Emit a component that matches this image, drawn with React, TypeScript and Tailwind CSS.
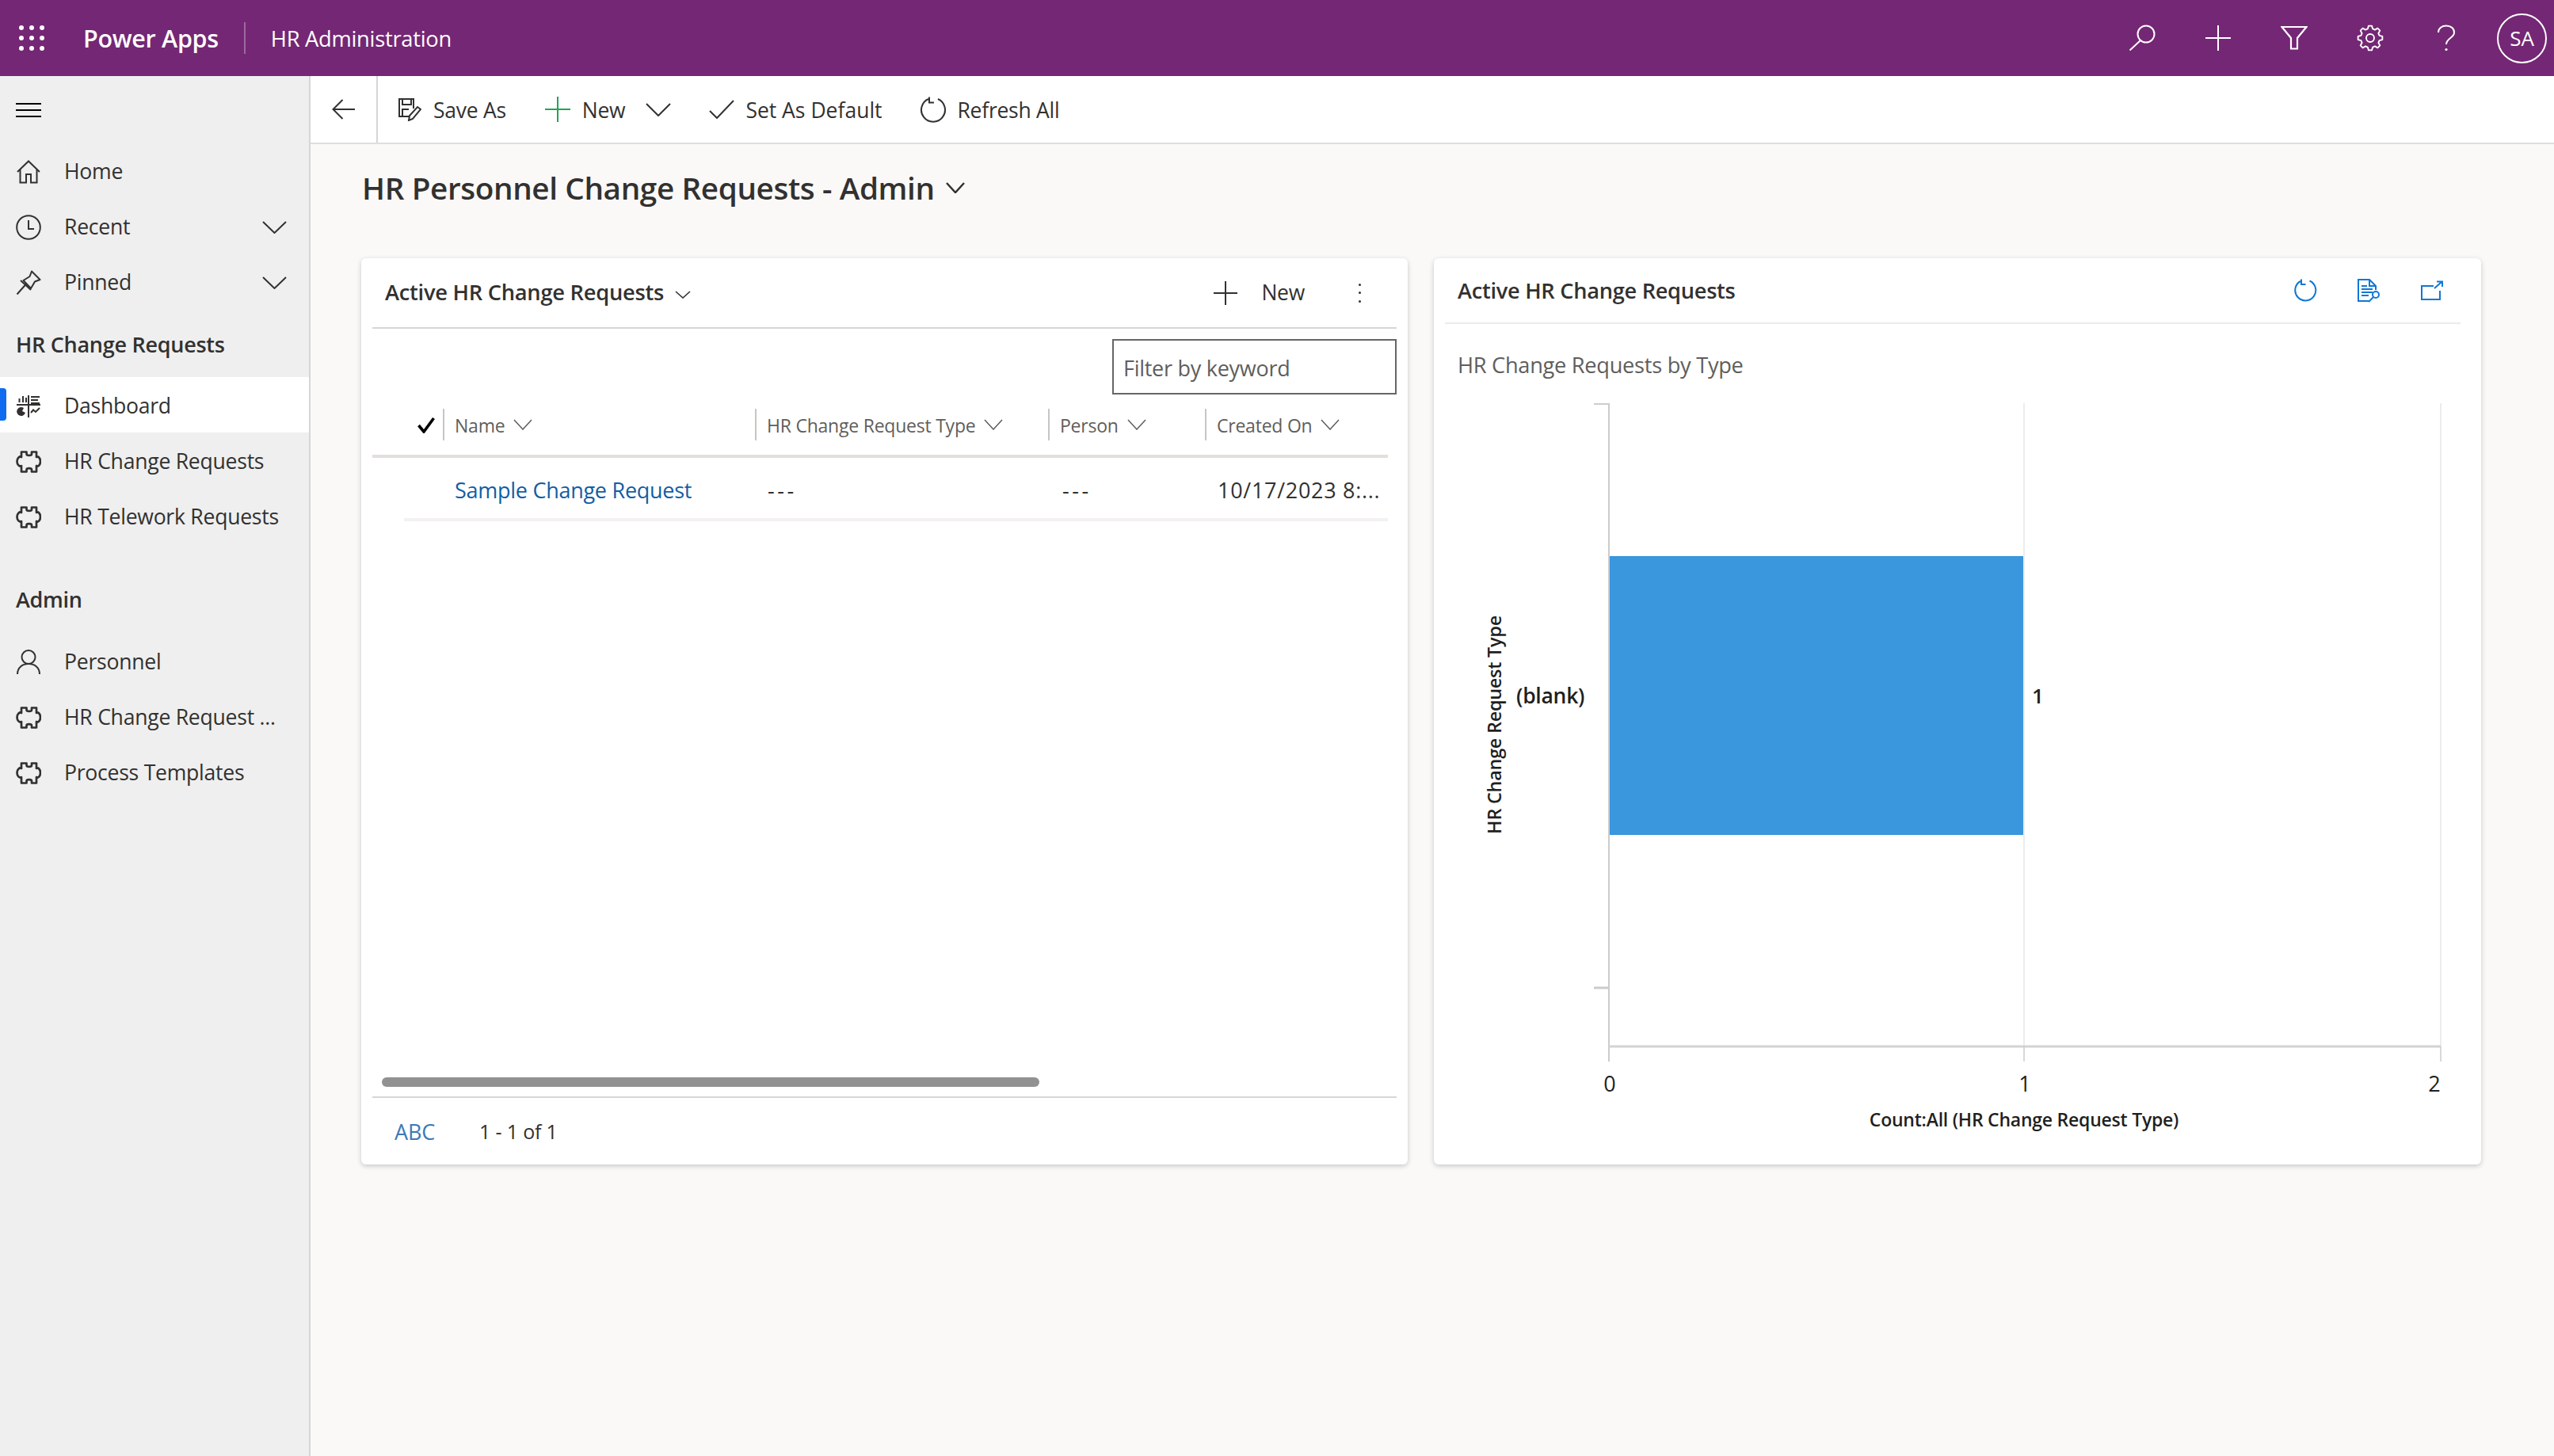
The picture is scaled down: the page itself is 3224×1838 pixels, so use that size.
import React from "react";

const gearPath = () => {
  const teeth = 8;
  const cx = 17;
  const cy = 17;
  const outer = 15.5;
  const inner = 12;
  const pts: string[] = [];
  for (let i = 0; i < teeth; i++) {
    const a = (i / teeth) * Math.PI * 2 - Math.PI / 2;
    const step = (Math.PI * 2) / teeth;
    const seq: [number, number][] = [
      [inner, a - step * 0.34],
      [outer, a - step * 0.17],
      [outer, a + step * 0.17],
      [inner, a + step * 0.34],
    ];
    seq.forEach(([r, t]) => {
      pts.push(`${(cx + r * Math.cos(t)).toFixed(2)} ${(cy + r * Math.sin(t)).toFixed(2)}`);
    });
  }
  return `M${pts.join(" L")} Z`;
};

const Chevron = ({ w = 31, h = 16, sw = 2, color = "#323130" }: { w?: number; h?: number; sw?: number; color?: string }) => (
  <svg width={w} height={h} viewBox={`0 0 ${w} ${h}`} fill="none" stroke={color} strokeWidth={sw}>
    <path d={`M1 1 L${w / 2} ${h - 1} L${w - 1} 1`} />
  </svg>
);

const Puzzle = () => (
  <svg width="32" height="28" viewBox="0 0 32 28" fill="none" stroke="#323130" strokeWidth="2.7" strokeLinejoin="round">
    <path d="M7 1.5H13.5V4C13.5 6.5 20 6.5 20 4V1.5H26V8C28 6.5 31 9 31 13.5C31 18 28 20.5 26 19V26.5H20V24C20 21.5 13.5 21.5 13.5 24V26.5H7V19C5 20.5 1.5 18 1.5 13.5C1.5 9 5 6.5 7 8Z" />
  </svg>
);

const HomeIcon = () => (
  <svg width="32" height="30" viewBox="0 0 32 30" fill="none" stroke="#323130" strokeWidth="2">
    <path d="M2 15 L16 1.5 L30 15" />
    <path d="M5.5 12 V28.5 H13 V18 H19 V28.5 H26.5 V12" />
  </svg>
);

const ClockIcon = () => (
  <svg width="32" height="32" viewBox="0 0 32 32" fill="none" stroke="#323130" strokeWidth="2">
    <circle cx="16" cy="16" r="14.8" />
    <path d="M16 7 V18 H23" />
  </svg>
);

const PinIcon = () => (
  <svg width="32" height="32" viewBox="0 0 32 32" fill="none" stroke="#323130" strokeWidth="2" strokeLinejoin="round">
    <path d="M20 1.5 L30.5 12 L24 14.5 L19 23 L9.5 13 L17.5 8 Z" />
    <path d="M13 17.5 L1.5 30.5" />
    <path d="M6 13 L19 25" />
  </svg>
);

const PersonIcon = () => (
  <svg width="32" height="32" viewBox="0 0 32 32" fill="none" stroke="#323130" strokeWidth="2">
    <ellipse cx="16" cy="9.5" rx="8.5" ry="8.5" />
    <path d="M2 31 C2 23 8 18 16 18 C24 18 30 23 30 31" />
  </svg>
);

const DashIcon = () => (
  <svg width="32" height="30" viewBox="0 0 32 30" fill="none" stroke="#323130" strokeWidth="2">
    <path d="M1 13 H31 M16 1 V29" strokeWidth="2" />
    <path d="M4.5 10 V5 M9 10 V2 M13 10 V4" />
    <path d="M19 3 H30 M19 7 H28 M19 11 H30" />
    <path d="M10 17 A5.5 5.5 0 1 0 12 23 L8 21 Z" fill="#323130" stroke="none" />
    <path d="M19 23 L22 19.5 L25 22 L30 17" />
  </svg>
);

const NavItem = ({ icon, label, chevron, active, low }: { icon: React.ReactNode; label: string; chevron?: boolean; active?: boolean; low?: boolean }) => (
  <div className={`relative flex h-[70px] items-center pl-[20px] ${low ? "pt-[3px]" : ""} ${active ? "bg-white" : ""}`}>
    {active && <div className="absolute left-0 top-[14px] h-[41px] w-[8px] rounded-r-[4px] bg-[#0f6cf0]" />}
    <div className="flex w-[32px] justify-center">{icon}</div>
    <span className="ml-[29px] whitespace-nowrap text-[26.6px] tracking-[-0.01em] text-[#323130]">{label}</span>
    {chevron && (
      <div className="ml-auto mr-[28px] flex">
        <Chevron />
      </div>
    )}
  </div>
);

const Column = ({ w, label }: { w: string; label: string }) => (
  <div className={`flex h-[40px] items-center border-l-2 border-[#c8c6c4] pl-[13px] ${w}`}>
    <span className="whitespace-nowrap pt-[3px] text-[23px] tracking-[-0.01em] text-[#605e5c]">{label}</span>
    <span className="ml-[11px] flex">
      <Chevron w={24} h={14} sw={1.5} color="#605e5c" />
    </span>
  </div>
);

const TopIcon = ({ children }: { children: React.ReactNode }) => (
  <div className="flex h-[96px] w-[96px] items-center justify-center">{children}</div>
);

export default function App() {
  return (
    <div className="flex h-screen w-full flex-col overflow-hidden bg-[#faf9f8] font-['Open_Sans','Noto_Sans',sans-serif] text-[#323130]">
      <header className="flex h-[96px] shrink-0 items-center bg-[#742774] text-white">
        <svg className="ml-[24px]" width="32" height="32" viewBox="0 0 32 32" fill="#ffffff">
          {[3, 16, 29].map((y) =>
            [3, 16, 29].map((x) => <circle key={`${x}-${y}`} cx={x} cy={y} r="3" />)
          )}
        </svg>
        <span className="ml-[49px] whitespace-nowrap pt-[2px] text-[30.5px] font-semibold tracking-[-0.01em]">Power Apps</span>
        <div className="ml-[32px] h-[40px] w-[2px] bg-[#9c6a9c]" />
        <span className="ml-[32px] whitespace-nowrap pt-[2px] text-[27.3px] tracking-[-0.01em]">HR Administration</span>
        <div className="ml-auto flex items-center">
          <TopIcon>
            <svg width="34" height="34" viewBox="0 0 34 34" fill="none" stroke="#fff" strokeWidth="2">
              <circle cx="22" cy="12" r="10.5" />
              <path d="M15 20 L1.5 32.5" />
            </svg>
          </TopIcon>
          <TopIcon>
            <svg width="34" height="34" viewBox="0 0 34 34" fill="none" stroke="#fff" strokeWidth="2">
              <path d="M17 1 V33 M1 17 H33" />
            </svg>
          </TopIcon>
          <TopIcon>
            <svg width="34" height="32" viewBox="0 0 34 32" fill="none" stroke="#fff" strokeWidth="2.2">
              <path d="M1.5 2 H32.5 L21 16 V29.5 H13 V16 Z" />
            </svg>
          </TopIcon>
          <TopIcon>
            <svg width="34" height="34" viewBox="0 0 34 34" fill="none" stroke="#fff" strokeWidth="1.9" strokeLinejoin="round">
              <path d={gearPath()} />
              <circle cx="17" cy="17" r="5" />
            </svg>
          </TopIcon>
          <TopIcon>
            <svg width="24" height="34" viewBox="0 0 24 34" fill="none" stroke="#fff" strokeWidth="2">
              <path d="M2 10 C2 4.5 6.5 1.5 12 1.5 C18 1.5 22 5 22 10 C22 17 12 17 12 25" />
              <circle cx="12" cy="31.5" r="1.6" fill="#fff" stroke="none" />
            </svg>
          </TopIcon>
        </div>
        <div className="ml-[16px] mr-[9px] flex h-[63px] w-[63px] items-center justify-center rounded-full border-2 border-white text-[26px]">
          SA
        </div>
      </header>

      <div className="flex min-h-0 flex-1">
        <aside className="w-[392px] shrink-0 border-r-2 border-[#d6d6d6] bg-[#efefef]">
          <div className="flex h-[86px] items-center pl-[20px]">
            <svg width="32" height="20" viewBox="0 0 32 20" fill="none" stroke="#000" strokeWidth="2">
              <path d="M0 2 H32 M0 10 H32 M0 18 H32" />
            </svg>
          </div>
          <NavItem icon={<HomeIcon />} label="Home" />
          <NavItem icon={<ClockIcon />} label="Recent" chevron />
          <NavItem icon={<PinIcon />} label="Pinned" chevron />
          <div className="flex h-[84px] items-center pl-[20px] pt-[3px] text-[27px] font-semibold tracking-[-0.01em] text-[#323130]">
            HR Change Requests
          </div>
          <NavItem icon={<DashIcon />} label="Dashboard" active low />
          <NavItem icon={<Puzzle />} label="HR Change Requests" low />
          <NavItem icon={<Puzzle />} label="HR Telework Requests" low />
          <div className="flex h-[115px] items-center pl-[20px] pt-[28px] text-[27px] font-semibold tracking-[-0.01em] text-[#323130]">
            Admin
          </div>
          <NavItem icon={<PersonIcon />} label="Personnel" />
          <NavItem icon={<Puzzle />} label="HR Change Request ..." />
          <NavItem icon={<Puzzle />} label="Process Templates" />
        </aside>

        <main className="flex min-w-0 flex-1 flex-col">
          <div className="flex h-[86px] shrink-0 items-center border-b-2 border-[#dedede] bg-white text-[26.5px] tracking-[-0.01em]">
            <div className="flex h-full w-[85px] items-center justify-center border-r-2 border-[#d6d6d6]">
              <svg width="30" height="26" viewBox="0 0 30 26" fill="none" stroke="#323130" strokeWidth="2">
                <path d="M29 13 H2 M13.5 1 L1.5 13 L13.5 25" />
              </svg>
            </div>
            <svg className="ml-[25px]" width="30" height="30" viewBox="0 0 30 30" fill="none" stroke="#323130" strokeWidth="2">
              <path d="M15 24 H2 V2 H20 V14" />
              <path d="M6 2 V9 H17 V2" />
              <path d="M6 24 V15 H14" />
              <path d="M14 29 L15 23 L25 12 L29 15 L19 27 Z" />
            </svg>
            <span className="ml-[15px] whitespace-nowrap pt-[3px]">Save As</span>
            <svg className="ml-[49px]" width="32" height="32" viewBox="0 0 32 32" fill="none" stroke="#22a455" strokeWidth="2">
              <path d="M16 0 V32 M0 16 H32" />
            </svg>
            <span className="ml-[15px] whitespace-nowrap pt-[3px]">New</span>
            <span className="ml-[26px] flex">
              <Chevron w={32} h={17} />
            </span>
            <svg className="ml-[48px]" width="32" height="24" viewBox="0 0 32 24" fill="none" stroke="#323130" strokeWidth="2">
              <path d="M1 14 L10 23 L31 1" />
            </svg>
            <span className="ml-[14px] whitespace-nowrap pt-[3px] tracking-normal">Set As Default</span>
            <svg className="ml-[47px]" width="34" height="34" viewBox="0 0 34 34" fill="none" stroke="#323130" strokeWidth="2">
              <path d="M23 4 A15 15 0 1 1 11 4" />
              <path d="M12 1.5 V8.5 H18" />
            </svg>
            <span className="ml-[14px] whitespace-nowrap pt-[3px]">Refresh All</span>
          </div>

          <div className="flex h-[110px] shrink-0 items-center pl-[65px]">
            <h1 className="whitespace-nowrap text-[38.7px] font-semibold tracking-[-0.01em] text-[#323130]">
              HR Personnel Change Requests - Admin
            </h1>
            <span className="ml-[14px] flex">
              <Chevron w={24} h={14} sw={2.5} />
            </span>
          </div>

          <div className="ml-[64px] mt-[34px] grid h-[1144px] w-[2676px] grid-cols-[1321px_1322px] gap-[33px]">
            <section className="flex flex-col rounded-[6px] bg-white px-[14px] shadow-[0_2px_6px_rgba(0,0,0,0.2)]">
              <div className="flex h-[89px] shrink-0 items-center border-b-2 border-[#d6d6d6] pl-[16px]">
                <span className="whitespace-nowrap text-[27.3px] font-semibold tracking-[-0.01em] text-[#323130]">
                  Active HR Change Requests
                </span>
                <span className="ml-[14px] mt-[4px] flex">
                  <Chevron w={20} h={10} sw={1.6} />
                </span>
                <svg className="ml-auto" width="30" height="30" viewBox="0 0 30 30" fill="none" stroke="#323130" strokeWidth="2">
                  <path d="M15 0 V30 M0 15 H30" />
                </svg>
                <span className="ml-[30px] whitespace-nowrap text-[26.5px] tracking-[-0.01em]">New</span>
                <div className="ml-[68px] mr-[45px] flex h-[24px] flex-col justify-between">
                  <div className="h-[3px] w-[3px] rounded-full bg-[#323130]" />
                  <div className="h-[3px] w-[3px] rounded-full bg-[#323130]" />
                  <div className="h-[3px] w-[3px] rounded-full bg-[#323130]" />
                </div>
              </div>

              <div className="mt-[13px] flex h-[70px] shrink-0 justify-end">
                <div className="flex w-[359px] items-center border-2 border-[#666666] pl-[12px] pt-[4px] text-[27px] tracking-[-0.01em] text-[#605e5c]">
                  Filter by keyword
                </div>
              </div>

              <div className="mr-[11px] flex h-[80px] shrink-0 items-center border-b-4 border-[#e1dfdd]">
                <div className="flex w-[89px] justify-end pr-[10px] pt-[2px]">
                  <svg width="22" height="20" viewBox="0 0 22 20" fill="none" stroke="#000" strokeWidth="3.6">
                    <path d="M1.5 10 L8 18 L20.5 1" />
                  </svg>
                </div>
                <Column w="w-[394px]" label="Name" />
                <Column w="w-[370px]" label="HR Change Request Type" />
                <Column w="w-[198px]" label="Person" />
                <Column w="w-[231px]" label="Created On" />
              </div>

              <div className="ml-[40px] mr-[11px] flex h-[80px] shrink-0 items-center border-b-4 border-[#f3f2f1] pt-[7px] text-[27px] tracking-[-0.01em]">
                <span className="ml-[64px] w-[395px] whitespace-nowrap text-[#115ea3]">Sample Change Request</span>
                <span className="w-[372px] tracking-[3.5px]">---</span>
                <span className="w-[196px] tracking-[3.5px]">---</span>
                <span className="whitespace-nowrap tracking-[0.7px]">10/17/2023 8:...</span>
              </div>

              <div className="flex-1" />
              <div className="ml-[12px] h-[12px] w-[830px] shrink-0 rounded-full bg-[#919191]" />
              <div className="mt-[12px] flex h-[86px] shrink-0 items-center border-t-2 border-[#d6d6d6] pl-[28px] pt-[2px] tracking-[-0.01em]">
                <span className="w-[107px] text-[27px] text-[#3b79b7]">ABC</span>
                <span className="whitespace-nowrap text-[25px]">1 - 1 of 1</span>
              </div>
            </section>

            <section className="flex flex-col rounded-[6px] bg-white pl-[14px] pr-[26px] shadow-[0_2px_6px_rgba(0,0,0,0.2)]">
              <div className="flex h-[83px] shrink-0 items-center border-b-2 border-[#ebebeb] pl-[16px]">
                <span className="whitespace-nowrap pt-[1px] text-[27.2px] font-semibold tracking-[-0.01em] text-[#323130]">
                  Active HR Change Requests
                </span>
                <div className="ml-auto flex items-center gap-[40px] pr-[16px]">
                  <div className="flex w-[40px] justify-center">
                    <svg width="30" height="30" viewBox="0 0 30 30" fill="none" stroke="#0f78d4" strokeWidth="2">
                      <path d="M20.5 2.5 A13 13 0 1 1 9 3" />
                      <path d="M10 0.5 V7 H15.5" />
                    </svg>
                  </div>
                  <div className="flex w-[40px] justify-center">
                    <svg width="30" height="30" viewBox="0 0 30 30" fill="none" stroke="#0f78d4" strokeWidth="2">
                      <path d="M15 28 H2 V1 H16 L24 9 V14" />
                      <path d="M16 1 V9 H24" />
                      <path d="M6 9 H13 M6 13 H20 M6 17 H20 M6 21 H15" />
                      <circle cx="24" cy="20" r="4" />
                      <path d="M21 23 L15 29" />
                    </svg>
                  </div>
                  <div className="flex w-[40px] justify-center">
                    <svg width="28" height="26" viewBox="0 0 28 26" fill="none" stroke="#0f78d4" strokeWidth="2">
                      <path d="M16 7 H1 V24 H24 V13" />
                      <path d="M17 10 L26 2 M20 1.5 H27 V8" />
                    </svg>
                  </div>
                </div>
              </div>
              <div className="flex h-[81px] shrink-0 items-center pl-[16px] pt-[23px] text-[27.2px] tracking-[-0.01em] text-[#605e5c]">
                HR Change Requests by Type
              </div>
              <svg className="block shrink-0" width="1282" height="970" viewBox="1824 490 1282 970">
                <rect x="2032" y="702" width="522" height="352" fill="#3a96dd" />
                <path d="M2555 509 V1321 M3081 509 V1321" stroke="#e6e6e6" strokeWidth="1.5" fill="none" />
                <path d="M2012 510 H2031 V1340" stroke="#cccccc" strokeWidth="2" fill="none" />
                <path d="M2012 1247 H2031" stroke="#cccccc" strokeWidth="3" fill="none" />
                <path d="M2031 1321 H3081" stroke="#d3d3d3" strokeWidth="3" fill="none" />
                <path d="M2555 1321 V1340 M3081 1321 V1340" stroke="#cccccc" strokeWidth="1.5" fill="none" />
                <text x="2032" y="1378" textAnchor="middle" className="fill-[#1f1f1f] text-[27px] font-medium">0</text>
                <text x="2556" y="1378" textAnchor="middle" className="fill-[#1f1f1f] text-[27px] font-medium">1</text>
                <text x="3073" y="1378" textAnchor="middle" className="fill-[#1f1f1f] text-[27px] font-medium">2</text>
                <text x="2555" y="1422" textAnchor="middle" className="fill-[#1f1f1f] text-[23px] font-semibold tracking-[-0.01em]">Count:All (HR Change Request Type)</text>
                <text x="1914" y="888" className="fill-[#1f1f1f] text-[26.5px] font-semibold tracking-[-0.01em]">(blank)</text>
                <text x="2565" y="888" className="fill-[#1f1f1f] text-[26px] font-semibold">1</text>
                <text x="1895" y="915" textAnchor="middle" transform="rotate(-90 1895 915)" className="fill-[#1f1f1f] text-[23.4px] font-semibold tracking-[-0.01em]">HR Change Request Type</text>
              </svg>
            </section>
          </div>
        </main>
      </div>
    </div>
  );
}
